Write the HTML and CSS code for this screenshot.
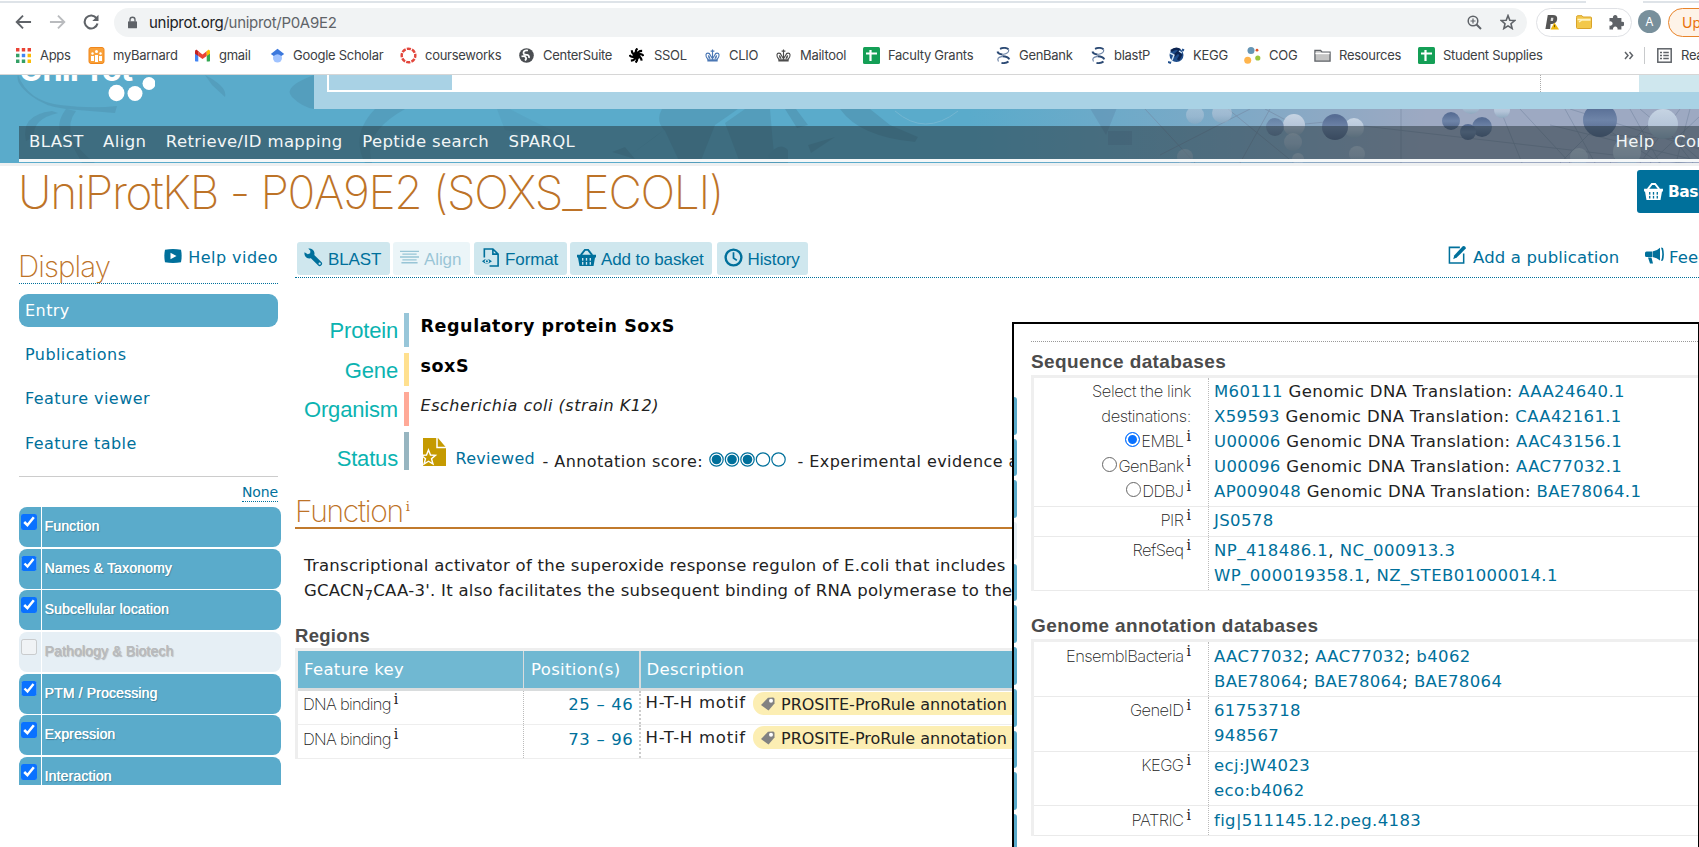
FILE: index.html
```
<!DOCTYPE html>
<html lang="en">
<head>
<meta charset="utf-8">
<title>UniProtKB - P0A9E2 (SOXS_ECOLI)</title>
<link rel="stylesheet" href="styles.css">
</head>
<body>
<svg width="0" height="0" class="defs">
  <symbol id="basket" viewBox="0 0 20 18"><path d="M0 6h20v3h-1l-1.600 9H2.600L1 9H0z" fill="currentColor"/><path d="M4 6.500 8.300 1h3.400L16 6.500" fill="none" stroke="currentColor" stroke-width="2"/><path d="M6 9.500v7M10 9.500v7M14 9.500v7" stroke="var(--gap)" stroke-width="1.400"/><path d="M3 13h14" stroke="currentColor" stroke-width="1.300"/></symbol>
  <symbol id="tag" viewBox="0 0 14 14"><path d="M0 8 7 0.800 12 0.500Q13.500 0.500 13.500 2V6.500L7.500 13.500Z" fill="#828282"/><circle cx="10" cy="3.800" r="2" fill="#fff"/></symbol>
  <symbol id="crown" viewBox="0 0 16 15"><path d="M3.500 12C2 10 .8 9 1 6.800 1.300 4.300 5 4.300 5.500 7L8 11M12.500 12C14 10 15.200 9 15 6.800 14.700 4.300 11 4.300 10.500 7L8 11M8 1V12M6 2.800h4" fill="none" stroke="currentColor" stroke-width="1.200"/><path d="M3 7.500Q4 6.500 5 8.500L6 11H4zM13 7.500Q12 6.500 11 8.500L10 11h2zM2.500 11.500h11V14h-11z" fill="currentColor"/></symbol>
  <symbol id="sheet" viewBox="0 0 17 17"><rect width="17" height="17" rx="1.500" fill="#149f56"/><path d="M3 6.500h11M7.500 3v11" stroke="#fff" stroke-width="2.200"/></symbol>
  <symbol id="ncbi" viewBox="0 0 15 17"><path d="M4 1.800Q9-.2 12.500 2.200M1.500 4.500Q2 7 6.500 7.500M6.500 9.300Q12 9.500 13.300 12.300M5.500 16Q10 16.500 12.500 14.500" fill="none" stroke="#2c4a74" stroke-width="1.900"/><path d="M12.500 2.200Q14 6.500 6.500 7.500M6.500 9.300Q0 10.500 2.500 14.500" fill="none" stroke="#6f86a8" stroke-width="1.200"/></symbol>
</svg>

<div class="chrome">
  <div class="tabs"><span></span><span></span></div>
  <div class="toolbar">
    <svg class="nav-arrow" viewBox="0 0 18 16"><path d="M17 8H2M8.500 1.300 1.800 8l6.700 6.700" fill="none" stroke="#5f6368" stroke-width="2"/></svg>
    <svg class="nav-arrow" viewBox="0 0 18 16"><path d="M1 8h15M9.500 1.300 16.200 8l-6.700 6.700" fill="none" stroke="#b9bbbe" stroke-width="2"/></svg>
    <svg class="reload" viewBox="0 0 16 16"><path d="M13.500 4.200A6.500 6.500 0 1 0 14.500 9.500" fill="none" stroke="#5f6368" stroke-width="2.100"/><path d="M15.500.8V7H9.300z" fill="#5f6368"/></svg>
    <div class="omnibox">
      <svg class="lock" viewBox="0 0 10 13"><rect y="5" width="10" height="8" rx="1" fill="#5f6368"/><path d="M2.200 5.500V3.500a2.800 2.800 0 0 1 5.600 0v2" fill="none" stroke="#5f6368" stroke-width="1.500"/></svg>
      <span class="url">uniprot.org<i>/uniprot/P0A9E2</i></span>
      <svg class="zoom" viewBox="0 0 15 15"><circle cx="6" cy="6" r="4.800" fill="none" stroke="#5f6368" stroke-width="1.500"/><path d="m9.500 9.500 4.500 4.500" stroke="#5f6368" stroke-width="2"/><path d="M3.500 6h5M6 3.500v5" stroke="#5f6368" stroke-width="1.200"/></svg>
      <svg class="star" viewBox="0 0 15 15"><path d="m7.500 1.500 1.700 4.300 4.600.3-3.500 3 1.100 4.500-3.900-2.500-3.900 2.500 1.100-4.500-3.500-3 4.600-.3z" fill="none" stroke="#5f6368" stroke-width="1.500"/></svg>
    </div>
    <div class="extensions">
      <svg viewBox="0 0 16 17"><path d="M3.500 1H9q5 0 4.500 4.500T8 10.500H6.500L6 16H1z" fill="#555"/><path d="M7 4h2.500L9 7.500H6.500z" fill="#ddd"/><path d="m10.500 9 5 7.500h-9z" fill="#efb90f"/><path d="M10.700 11.500v2.500" stroke="#704e00"/></svg>
      <svg viewBox="0 0 16 14"><path d="M.5 2.500V12.500q0 1 1 1h13q1 0 1-1V3q0-1-1-1H7L6 .7H1.500q-1 0-1 1.800z" fill="#f3c84a" stroke="#d9a32a"/><path d="M1.500 4.500h13M3 7l3-2h8.500" fill="none" stroke="#fff3c4" stroke-width="1.500"/></svg>
      <svg viewBox="0 0 16 16"><path d="M1.500 4H5a2.300 2.300 0 1 1 4.400 0h4v3.800a2.300 2.300 0 1 1 0 4.300V15.500H9.500a2.300 2.300 0 1 0-4.400 0H1.500v-4a2.200 2.200 0 1 0 0-4z" fill="#5f6368"/></svg>
    </div>
    <div class="avatar">A</div>
    <div class="update">Update</div>
  </div>
  <div class="bookmarks">
    <svg viewBox="0 0 14 14"><g fill="#ea4335"><path d="M0 0h3.200v3.200H0zM5.400 0h3.200v3.200H5.400zM10.800 0H14v3.200h-3.200z"/></g><g fill="#34a066"><path d="M0 5.400h3.200v3.200H0zM0 10.800h3.200V14H0zM5.400 10.800h3.200V14H5.400z"/></g><path d="M5.400 5.400h3.200v3.200H5.400z" fill="#4285f4"/><path d="M10.800 5.400H14v3.200h-3.200zM10.800 10.800H14V14h-3.200z" fill="#fbbc05"/></svg><span>Apps</span>
    <svg viewBox="0 0 16 17"><rect x=".5" y=".5" width="15" height="16" rx="2" fill="#f9a13a" stroke="#f0861b"/><path d="M2.500 14V9h3v5M10.500 14V9h3v5M6.500 15V8h3v7" fill="#fff"/><circle cx="4" cy="6.500" r="1.200" fill="#fff"/><circle cx="12" cy="6.500" r="1.200" fill="#fff"/><circle cx="8" cy="4.500" r="1.500" fill="#fff"/></svg><span>myBarnard</span>
    <svg viewBox="0 0 16 13"><path d="M0 2v10q0 .8.8.8H3.500V5z" fill="#4285f4"/><path d="M16 2v10q0 .8-.8.800H12.500V5z" fill="#34a853"/><path d="M3.500 7V2L8 5.400 12.500 2v5L8 10.200z" fill="#ea4335"/><path d="M0 2.200Q0 0 2 .4L3.500 2v5L0 4.500z" fill="#c5221f"/><path d="M16 2.200Q16 0 14 .4L12.500 2v5L16 4.500z" fill="#fbbc04"/></svg><span>gmail</span>
    <svg viewBox="0 0 14 15"><circle cx="7" cy="10" r="4.500" fill="#a0c3ff"/><path d="M7 .8 13.700 6 10.800 8Q7 4.500 3.200 8L.3 6z" fill="#3c78dc"/></svg><span>Google Scholar</span>
    <svg viewBox="0 0 18 18"><circle cx="9" cy="9" r="7.200" fill="none" stroke="#e2463c" stroke-width="2.600" stroke-dasharray="4.400 1.250" stroke-dashoffset="2"/></svg><span>courseworks</span>
    <svg viewBox="0 0 15 15"><circle cx="7.500" cy="7.500" r="7.300" fill="#4b4e52"/><path d="M9 2.500Q5 2 4.500 4.500T8 6.800Q10.500 7.500 10 10M2.500 8.500Q5 7.500 6.500 9T6 12.500" fill="none" stroke="#fff" stroke-width="1.700"/></svg><span>CenterSuite</span>
    <svg viewBox="0 0 16 16"><circle cx="8" cy="8" r="4" fill="#000"/><path d="M8 8Q6 3 9 .5M8 8Q9 3 14 3M8 8Q13 5 15.500 8.500M8 8Q13 9 13.500 13.500M8 8Q10 13 7 15.500M8 8Q7 13 2 13.500M8 8Q3 11 .5 7.500M8 8Q3 7 3 2.500" stroke="#000" stroke-width="2.300" fill="none"/></svg><span>SSOL</span>
    <svg class="blue"><use href="#crown"/></svg><span>CLIO</span>
    <svg class="grey"><use href="#crown"/></svg><span>Mailtool</span>
    <svg><use href="#sheet"/></svg><span>Faculty Grants</span>
    <svg><use href="#ncbi"/></svg><span>GenBank</span>
    <svg><use href="#ncbi"/></svg><span>blastP</span>
    <svg viewBox="0 0 17 17"><circle cx="8.500" cy="8" r="7" fill="#1f4e8c"/><path d="M3 4Q8 0 12 3M6 9l4-4 3 3-3 5" fill="none" stroke="#0c2450" stroke-width="2.500"/><path d="M2 6l4 2-2 5M11 4l3 2M1 16l3-2" stroke="#cfe3f5" stroke-width="1.400" fill="none"/><path d="M14 2.500l2 1M0 15l3 1" stroke="#1f4e8c" stroke-width="2"/></svg><span>KEGG</span>
    <svg viewBox="0 0 17 17"><circle cx="7" cy="3.500" r="3.500" fill="#6595b5"/><circle cx="13" cy="3.200" r="1.400" fill="#e0572a"/><circle cx="3.700" cy="13.300" r="3.500" fill="#ffb54d"/><circle cx="13.800" cy="11" r="2.600" fill="#9bc53d"/></svg><span>COG</span>
    <svg viewBox="0 0 18 15"><path d="M1 13V2h6l1.500 2H17v9.500H1z" fill="#c4c4c4" stroke="#5f6368" stroke-width="1.400"/><path d="M1.500 5.300h15" stroke="#fff" stroke-width="1.600"/></svg><span>Resources</span>
    <svg><use href="#sheet"/></svg><span>Student Supplies</span>
    <svg viewBox="0 0 10 9"><path d="M1 1l3 3.500L1 8M5.500 1l3 3.500-3 3.500" fill="none" stroke="#5f6368" stroke-width="1.500"/></svg><b></b>
    <svg viewBox="0 0 15 15"><rect x=".8" y=".8" width="13.400" height="13.400" fill="none" stroke="#5f6368" stroke-width="1.500"/><path d="M3 4.500h2M3 7.500h2M3 10.500h2M6.300 4.500h5.500M6.300 7.500h5.500M6.300 10.500h5.500" stroke="#5f6368" stroke-width="1.500"/></svg><span>Reading List</span>
  </div>
</div>

<header class="banner">
  <svg class="art" viewBox="0 0 1699 88" preserveAspectRatio="none">
    <defs>
      <linearGradient id="bg"><stop offset=".57" stop-color="#5aabcb"/><stop offset=".73" stop-color="#7fa9c6"/><stop offset=".84" stop-color="#9da9c2"/><stop offset="1" stop-color="#9da9c2"/></linearGradient>
      <linearGradient id="ball" x2="0" y2="1"><stop offset="0" stop-color="#c6d4e3"/><stop offset=".6" stop-color="#b4c4d8"/><stop offset="1" stop-color="#8fa9bf"/></linearGradient>
      <linearGradient id="dark" x2="0" y2="1"><stop offset=".1" stop-color="#576d94"/><stop offset=".5" stop-color="#6e84a8"/><stop offset="1" stop-color="#506488"/></linearGradient>
    </defs>
    <rect width="1699" height="88" fill="url(#bg)"/>
    <g fill="#539bb9">
      <path d="M18 0Q28 26 60 30T117 31L115 38Q90 36 66 34 45 32 30 20T18 0zM66 34Q50 55 72 70L82 88H95Q58 60 76 36zM52 36Q20 40 26 66L34 62Q32 44 58 38z" opacity=".8"/>
      <path d="M205 0Q228 12 225 22L212 10zM314 0Q282 12 292 22T314 34zM375 34Q350 60 365 88H372Q362 58 405 34z" opacity=".8"/>
      <path d="M497 34 505 55 570 64Q520 40 510 34z" opacity=".4"/>
      <path d="M662 34Q655 46 665 56L680 88H700L715 50 738 34zM725 48 745 34H770Q772 60 775 88H740z" opacity=".9"/>
      <path d="M785 34h11l12 16-11 3zM768 80q12-14 20-5v13h-18zM840 34Q860 62 915 67L918 62 890 50 870 34zM808 70 835 62 811 78zM635 84l-23-7 13-5zM655 62l10-8-40 30z"/>
    </g>
    <path d="M895 36Q925 62 958 36" fill="none" stroke="#74b6d1"/>
    <g stroke="#74859f" stroke-width=".8" opacity=".65"><path d="M1145 34l50 54M1160 80l90-46M1228 34l66 54M1240 88l30-54M1265 34l30 16M1355 50l345 40M1401 34v54M1295 50l40-4M1500 34l22 54M1520 34l50 54M1550 50l149 36M1560 88l40-40M1565 34l30 54M1600 50l60 38M1610 88l50-50M1630 34l30 54M1640 34l59 50M1650 88l49-46M1663 50l30 38M1680 34l-40 54M1690 34l-14 54M1610 60l89 5M1570 34l129 40"/></g>
    <g fill="url(#ball)"><circle cx="1195" cy="40" r="9" opacity=".5"/><circle cx="1222" cy="38" r="10" opacity=".6"/><circle cx="1294" cy="50" r="11"/><circle cx="1354" cy="53" r="10"/><circle cx="1293" cy="67" r="9" opacity=".6"/><circle cx="1357" cy="79" r="8" opacity=".7"/><circle cx="1185" cy="82" r="8" opacity=".5"/><circle cx="1298" cy="84" r="6" opacity=".6"/><circle cx="1502" cy="35" r="8"/><circle cx="1471" cy="29" r="10"/><circle cx="1663" cy="49" r="15"/><circle cx="1627" cy="77" r="14"/><circle cx="1579" cy="82" r="9" opacity=".8"/></g>
    <g fill="url(#dark)"><circle cx="1275" cy="52" r="9" opacity=".6"/><circle cx="1335" cy="52" r="13"/><circle cx="1451" cy="46" r="9"/><circle cx="1482" cy="52" r="10"/><circle cx="1468" cy="57" r="8"/><circle cx="1600" cy="45" r="17"/></g>
    <path d="M1108 56h24v14h-24zM1088 30l18 30 12-30z" fill="#5d86ab" opacity=".4"/>
  </svg>
  <div class="banner-rows">
    <div class="banner-top">
      <div class="logo"><span>UniProt</span>
        <svg viewBox="0 0 50 27"><ellipse cx="11.500" cy="18" rx="8" ry="8.200" fill="#fff"/><ellipse cx="30" cy="18.500" rx="7.500" ry="7.500" fill="#fff"/><ellipse cx="44" cy="8.500" rx="6.500" ry="6.500" fill="#fff"/></svg>
      </div>
      <div class="searchbox"><div class="dropdown"></div><div class="query"></div><div class="adv"></div><div class="go"></div></div>
    </div>
    <nav><a>BLAST</a><a>Align</a><a>Retrieve/ID mapping</a><a>Peptide search</a><a>SPARQL</a><a class="help">Help</a><a>Contact</a></nav>
  </div>
</header>

<div class="title-row">
  <h1>UniProtKB - P0A9E2 (SOXS_ECOLI)</h1>
  <div class="basket-btn"><svg><use href="#basket"/></svg>Basket</div>
</div>

<div class="columns">
  <aside>
    <div class="display-row"><h2>Display</h2>
      <div class="help-video"><svg viewBox="0 0 18 14"><path d="M1 .8Q9-.6 17 .8 18.300 7 17 13.200 9 14.600 1 13.200-.3 7 1 .8z" fill="#00709b"/><path d="m6.500 3.800 6 3.200-6 3.200z" fill="#fff"/></svg>Help video</div></div>
    <div class="tab on">Entry</div>
    <div class="tabs-list"><div>Publications</div><div>Feature viewer</div><div>Feature table</div></div>
    <div class="none"><span>None</span></div>
    <div class="sections">
      <label><input type="checkbox" checked><span>Function</span></label>
      <label><input type="checkbox" checked><span>Names &amp; Taxonomy</span></label>
      <label><input type="checkbox" checked><span>Subcellular location</span></label>
      <label class="off"><input type="checkbox" disabled><span>Pathology &amp; Biotech</span></label>
      <label><input type="checkbox" checked><span>PTM / Processing</span></label>
      <label><input type="checkbox" checked><span>Expression</span></label>
      <label><input type="checkbox" checked><span>Interaction</span></label>
    </div>
  </aside>

  <main>
    <div class="actions">
      <div class="btn b1"><svg viewBox="0 0 20 20"><path d="M8.500 8.500 16.500 16.500" stroke="#00709b" stroke-width="5" stroke-linecap="round"/><path d="M4.500.6A5.300 5.300 0 1 1 .6 4.500L4 6.500 6.500 5.500 6.700 3z" fill="#00709b"/><circle cx="16.500" cy="16.500" r="1.200" fill="#cfe7ee"/></svg>BLAST</div>
      <div class="btn b2 dim"><svg viewBox="0 0 20 20"><path d="M0 3.500h20M2.500 6.500h15M0 9.500h20M2.500 12.500h15M1.500 15.500h17" stroke="#00709b" stroke-width="1.400"/></svg>Align</div>
      <div class="btn b3"><svg viewBox="0 0 18 20"><path d="M2.500 10V1h9l5.500 5.500V19H8M11.500 1v5.500H17" fill="none" stroke="#00709b" stroke-width="1.700"/><path d="M0 14q5-5 10.500 0-5.500 5-10.500 0z" fill="#00709b"/><circle cx="5.200" cy="14" r="2.300" fill="#cfe7ee"/><circle cx="5.200" cy="14" r="1.100" fill="#00709b"/></svg>Format</div>
      <div class="btn b4"><svg><use href="#basket"/></svg>Add to basket</div>
      <div class="btn b5"><svg viewBox="0 0 20 20"><circle cx="10" cy="10" r="8.300" fill="none" stroke="#00709b" stroke-width="2.500"/><path d="M10 4.500V10.500L13.500 13" fill="none" stroke="#00709b" stroke-width="1.800"/></svg>History</div>
      <div class="link pub"><svg viewBox="0 0 19 20"><path d="M12 2.500H1V19H16V9" fill="none" stroke="#00709b" stroke-width="1.600"/><path d="m5 15 1-4L15 1.300Q17.500.5 18.500 3.500L9 13z" fill="#00709b"/></svg>Add a publication</div>
      <div class="link feed"><svg viewBox="0 0 19 17"><path d="M0 6q0-1.500 1.500-1.500H7V10H1.500Q0 10 0 8.500zM7.500 4.500Q12 4 15 .8V13.500Q12 10.500 7.500 10zM3 10.500H6.500L8 16.500H5zM16 .5q2.500 6.500 0 13.500l2-.5q1.800-6 0-12.500z" fill="#00709b"/></svg>Feedback</div>
    </div>

    <dl class="facts">
      <div class="c1"><dt>Protein</dt><dd><b>Regulatory protein SoxS</b></dd></div>
      <div class="c2"><dt>Gene</dt><dd><b>soxS</b></dd></div>
      <div class="c3"><dt>Organism</dt><dd><i>Escherichia coli (strain K12)</i></dd></div>
      <div class="c4"><dt>Status</dt><dd class="status">
        <svg class="seal" viewBox="0 0 23 28"><path d="M0 0H15L23 9.500V28H0z" fill="#c59a00"/><path d="M14 0V9.500H23" fill="none" stroke="#fff" stroke-width="1.500"/><path d="m5.500 12 2 5 5 .3-4 3.400L10 26l-4.500-2.800L1 26l1.500-5.300L-1.500 17.300 3.500 17z" fill="#c59a00" stroke="#fff" stroke-width="1.400"/></svg>
        <span class="reviewed">Reviewed</span><span class="ann">- Annotation score:</span>
        <svg class="score" viewBox="0 0 78 15"><g fill="none" stroke="#00709b" stroke-width="1.200"><circle cx="7.500" cy="7.500" r="6.700"/><circle cx="23" cy="7.500" r="6.700"/><circle cx="38.500" cy="7.500" r="6.700"/><circle cx="54" cy="7.500" r="6.700"/><circle cx="69.500" cy="7.500" r="6.700"/></g><g fill="#00709b"><circle cx="7.500" cy="7.500" r="4.800"/><circle cx="23" cy="7.500" r="4.800"/><circle cx="38.500" cy="7.500" r="4.800"/></g></svg>
        <span class="exp">- Experimental evidence at protein level</span></dd></div>
    </dl>

    <h2 class="function">Function<sup>i</sup></h2>
    <p>Transcriptional activator of the superoxide response regulon of E.coli that includes<br><span class="line2">GCACN<sub>7</sub>CAA-3'. It also facilitates the subsequent binding of RNA polymerase to the</span></p>
    <h3>Regions</h3>
    <div class="features">
      <div class="fh"><span>Feature key</span><span>Position(s)</span><span>Description</span></div>
      <div class="fr"><span class="thin">DNA binding<sup>i</sup></span><span class="pos">25 – 46</span><span class="desc"><em>H-T-H motif</em><u><svg><use href="#tag"/></svg>PROSITE-ProRule annotation</u></span></div>
      <div class="fr r2"><span class="thin">DNA binding<sup>i</sup></span><span class="pos">73 – 96</span><span class="desc"><em>H-T-H motif</em><u><svg><use href="#tag"/></svg>PROSITE-ProRule annotation</u></span></div>
    </div>
  </main>
</div>

<section class="inset">
  <div class="edge"><i></i><i></i><i></i><i class="pale"></i><i></i><i></i><i></i><i></i><i></i><i></i><i></i></div>
  <div class="xrefs">
    <h3>Sequence databases</h3>
    <div class="xt">
      <div class="xr"><div class="xl"><span class="plain">Select the link</span><span class="plain">destinations:</span><span><s class="sel"></s>EMBL<sup>i</sup></span><span><s></s>GenBank<sup>i</sup></span><span><s></s>DDBJ<sup>i</sup></span></div>
        <div class="xv"><span><a>M60111</a> Genomic DNA Translation: <a>AAA24640.1</a></span><span><a>X59593</a> Genomic DNA Translation: <a>CAA42161.1</a></span><span><a>U00006</a> Genomic DNA Translation: <a>AAC43156.1</a></span><span><a>U00096</a> Genomic DNA Translation: <a>AAC77032.1</a></span><span><a>AP009048</a> Genomic DNA Translation: <a>BAE78064.1</a></span></div></div>
      <div class="xr"><div class="xl"><span>PIR<sup>i</sup></span></div><div class="xv"><span><a>JS0578</a></span></div></div>
      <div class="xr"><div class="xl"><span>RefSeq<sup>i</sup></span></div><div class="xv wide"><span><a>NP_418486.1</a>, <a>NC_000913.3</a></span><span><a>WP_000019358.1</a>, <a>NZ_STEB01000014.1</a></span></div></div>
    </div>
    <h3 class="second">Genome annotation databases</h3>
    <div class="xt genome">
      <div class="xr"><div class="xl"><span>EnsemblBacteria<sup>i</sup></span></div><div class="xv"><span><a>AAC77032</a>; <a>AAC77032</a>; <a>b4062</a></span><span><a>BAE78064</a>; <a>BAE78064</a>; <a>BAE78064</a></span></div></div>
      <div class="xr"><div class="xl"><span>GeneID<sup>i</sup></span></div><div class="xv"><span><a>61753718</a></span><span><a>948567</a></span></div></div>
      <div class="xr"><div class="xl"><span>KEGG<sup>i</sup></span></div><div class="xv"><span><a>ecj:JW4023</a></span><span><a>eco:b4062</a></span></div></div>
      <div class="xr"><div class="xl"><span>PATRIC<sup>i</sup></span></div><div class="xv"><span><a>fig|511145.12.peg.4183</a></span></div></div>
    </div>
  </div>
</section>
</body>
</html>
```
FILE: styles.css
```
* { box-sizing: border-box; }
body { margin: 0; width: 1699px; height: 847px; overflow: hidden; position: relative; background: #fff; color: #222; font: 16.5px "DejaVu Sans", sans-serif; white-space: nowrap; }
h1, h2, h3, p, dl, dd { margin: 0; }
svg { display: block; flex: none; }
.defs { position: absolute; }
i { font-style: normal; }

/* browser chrome */
.chrome { height: 75px; border-bottom: 1px solid #d6d6d6; font-family: Inter, sans-serif; }
.tabs { display: flex; justify-content: space-between; height: 3px; padding-top: 1px; }
.tabs span { width: 1586px; background: #dee3e8; }
.tabs span + span { width: 56px; }
.toolbar { display: flex; align-items: center; height: 37px; overflow: hidden; }
.toolbar > * { flex: none; }
.nav-arrow { width: 17px; height: 16px; margin-left: 15px; }
.nav-arrow + .nav-arrow { margin-left: 17px; }
.reload { width: 16px; height: 16px; margin-left: 17px; }
.omnibox { display: flex; align-items: center; width: 1413px; height: 29px; margin: 1px 0 0 15px; padding-left: 14px; border-radius: 15px; background: #f1f3f4; }
.lock { width: 9px; height: 13px; }
.url { width: 1308px; margin-left: 12px; font-size: 15px; letter-spacing: -.3px; color: #202124; }
.url i { color: #5f6368; }
.zoom { width: 15px; height: 15px; margin-left: 10px; }
.star { width: 16px; height: 16px; margin-left: 18px; }
.extensions { display: flex; align-items: center; justify-content: space-between; width: 96px; height: 29px; margin: 1px 0 0 9px; padding: 0 7px; border: 1px solid #dfe1e5; border-radius: 15px; }
.extensions svg { width: 16px; height: 16px; }
.avatar { width: 23px; height: 23px; margin-left: 6px; border-radius: 50%; background: #78909c; color: #fff; font-size: 12px; line-height: 23px; text-align: center; }
.update { width: 100px; height: 29px; margin: 1px 0 0 7px; padding-left: 13px; border: 1.5px solid #e8842b; border-radius: 15px; background: #fef3e8; color: #e8710a; font-size: 14px; line-height: 27px; }
.bookmarks { display: grid; align-items: center; height: 30px; padding-left: 16px; font-size: 13px; line-height: 16px; letter-spacing: -.28px; color: #3c4043;
  grid-template-columns: 24px 48px 25px 82px 24px 51px 23px 107px 25px 94px 24px 86px 25px 51px 24px 47px 24px 63px 25px 108px 23px 72px 23px 54px 25px 51px 25px 45px 25px 79px 25px 181px 20px 13px 24px 60px; }
.bookmarks svg { width: 15px; height: 15px; }
.bookmarks svg:nth-of-type(2), .bookmarks svg:nth-of-type(5), .bookmarks svg:nth-of-type(10), .bookmarks svg:nth-of-type(13), .bookmarks svg:nth-of-type(14), .bookmarks svg:nth-of-type(15), .bookmarks svg:nth-of-type(16) { width: 17px; height: 17px; }
.bookmarks svg:nth-of-type(11), .bookmarks svg:nth-of-type(12) { height: 17px; }
.bookmarks svg:nth-of-type(17) { width: 10px; height: 9px; }
.bookmarks b { width: 1px; height: 17px; background: #c8cacc; }
.blue { color: #4a77b4; }
.grey { color: #4c4c4c; }

/* site banner */
.banner { position: relative; height: 91px; border-bottom: 3px solid #eef0f1; }
.art { position: absolute; left: 0; top: 0; width: 1699px; height: 88px; }
.banner-rows { position: relative; }
.banner-top { display: flex; height: 51px; }
.logo { display: flex; width: 314px; height: 30px; overflow: hidden; padding-left: 19px; }
.logo span { height: 9px; width: 86px; margin-top: -24px; font: 700 33px/36px Inter, sans-serif; letter-spacing: -1px; color: #fff; }
.logo svg { width: 50px; height: 27px; }
.searchbox { display: flex; width: 1385px; height: 34px; padding-left: 13px; border-bottom: 17px solid #a9d2e5; background: #a9d2e5; }
.dropdown { width: 125px; height: 17px; border: 2px solid #fff; border-top: 0; border-right: 0; background: #a9d2e5; }
.query { width: 1088px; background: #fff; }
.adv { width: 99px; border-left: 1px dotted #aaa; background: #fff; }
.go { width: 60px; background: #cfe7ee; }
nav { display: flex; height: 36px; margin-left: 19px; padding-left: 10px; border-bottom: 3px solid #f4f7f8; background: rgba(34, 47, 53, .5); background-clip: padding-box; color: #f2f6f7; font-size: 16.5px; line-height: 32px; letter-spacing: .37px; }
nav a { margin-right: 19.500px; }
nav .help { margin-left: auto; }
nav .help + a { width: 5px; margin-right: 20px; }

.title-row { display: flex; justify-content: space-between; height: 63px; padding-left: 18px; }
h1 { font: 200 46px/52px Inter, sans-serif; letter-spacing: -1.3px; color: #bd7328; }
.basket-btn { display: flex; align-items: center; flex: none; width: 62px; height: 43px; margin-top: 4px; padding-left: 7px; gap: 5px; border-radius: 3px 0 0 3px; background: #00709b; color: #fff; font-weight: 700; font-size: 15.5px; letter-spacing: -.5px; --gap: #00709b; }
.basket-btn svg { width: 19px; height: 17px; }

.columns { display: flex; height: 618px; }

/* sidebar */
aside { width: 295px; padding-left: 19px; color: #00709b; font-size: 16px; letter-spacing: .44px; flex: none; }
.display-row { display: flex; justify-content: space-between; width: 259px; height: 55px; border-bottom: 1.500px dotted #00709b; }
.display-row h2 { margin: 22px 0 0 -1px; font: 200 29.500px/30px Inter, sans-serif; letter-spacing: -.9px; color: #bd7328; }
.help-video { display: flex; align-items: flex-start; margin-top: 17px; gap: 6px; line-height: 24px; }
.help-video svg { width: 18px; height: 14px; margin-top: 3px; }
.tab { width: 259px; height: 33px; margin-top: 10px; padding-left: 6px; border-radius: 9px; background: #5aabcb; color: #fff; line-height: 34px; }
.tabs-list { width: 259px; height: 150px; padding: 5.500px 0 0 6px; border-bottom: 1px solid #ccc; line-height: 44.500px; }
.none { display: flex; justify-content: flex-end; width: 259px; height: 30px; padding-top: 4px; font-size: 14px; line-height: 22px; letter-spacing: -.1px; }
.none span { height: 21px; border-bottom: 1px dotted #00709b; }
.sections { display: flex; flex-direction: column; gap: 1.700px; width: 262px; height: 278px; overflow: hidden; font: 14px "Liberation Sans", sans-serif; letter-spacing: .15px; color: #fff; }
.sections label { display: flex; flex: none; height: 40px; border-radius: 8px; background: #5aabcb; text-shadow: .3px 0 0 currentColor, 1px 1px 1px rgba(0, 0, 0, .25); }
.sections input { width: 15.500px; height: 15.500px; margin: 7px 4.500px 0 2px; accent-color: #0a72ff; }
.sections span { padding: 7px 0 0 2.500px; line-height: 24px; border-left: 1.300px solid #fff; }
.sections .off { background: #e6eff5; color: #b9babb; }

/* main column */
main { width: 1404px; flex: none; }
.actions { display: flex; height: 48.500px; padding-left: 2px; border-bottom: 1.500px dotted #00709b; color: #00709b; }
.btn { display: flex; height: 33px; margin: 13px 3px 0 0; padding: 5px 0 0 7px; gap: 5px; border-radius: 3px; background: #cfe7ee; font: 17px/26px "Liberation Sans", sans-serif; letter-spacing: -.1px; --gap: #cfe7ee; }
.btn svg { width: 19px; height: 19px; margin-top: 1px; }
.b1 { width: 93px; }
.b2 { width: 77px; margin-right: 4px; }
.b3 { width: 93px; }
.b4 { width: 142px; margin-right: 4.500px; }
.b5 { width: 91.500px; }
.dim { opacity: .4; }
.link { display: flex; padding-top: 16px; gap: 6px; line-height: 25px; letter-spacing: .15px; }
.pub { margin-left: auto; width: 197px; }
.feed { width: 54px; gap: 5px; }
.link svg { width: 19px; height: 19px; }
.feed svg { height: 17px; margin-top: 2px; }

.facts { display: flex; flex-direction: column; gap: 6px; margin-top: 35.500px; }
.facts div { display: flex; height: 34px; }
.facts dt { width: 114px; padding-right: 6px; border-right: 5px solid #98c6d9; text-align: right; font: 22px/35px "Liberation Sans", sans-serif; letter-spacing: -.17px; color: #0bb3b1; }
.facts dd { padding-left: 11.500px; line-height: 27px; color: #000; }
.facts b { font-size: 17.500px; letter-spacing: .58px; }
.facts .c2 dd { line-height: 26px; }
.facts dd i { font-style: italic; font-size: 16px; letter-spacing: .53px; line-height: 27px; color: #222; }
.facts .c2 { height: 33px; }
.facts .c2 dt { border-color: #ffe08f; }
.facts .c3 dt { border-color: #ffa997; line-height: 36px; }
.facts .c4 { height: 38px; }
.facts .c4 dt { border-color: #97b5c0; padding-top: 16px; line-height: 22px; }
.facts .status { display: flex; line-height: 22px; font-size: 16px; letter-spacing: .45px; color: #222; }
.seal { width: 23px; height: 28px; margin: 6px 0 0 2px; }
.reviewed { width: 79px; margin: 15.500px 8px 0 10px; color: #00709b; letter-spacing: .3px; }
.ann { width: 161px; margin: 18.500px 5px 0 0; }
.score { width: 78px; height: 15px; margin-top: 19.500px; }
.exp { margin: 18.500px 0 0 11px; }

.function { height: 35px; margin-top: 24px; border-bottom: 2px solid #c17a2c; font: 200 30px/34px Inter, sans-serif; letter-spacing: -1.300px; color: #bd7328; }
.function sup { margin-left: 3px; font: 13px/0 "DejaVu Serif", serif; vertical-align: 11px; }
main p { margin-top: 24px; padding-left: 9px; font-size: 16.500px; line-height: 25px; letter-spacing: .26px; }
main p sub { font-size: 13.500px; line-height: 0; vertical-align: -4px; }
h3 { font: 700 18.500px/27px "Liberation Sans", sans-serif; letter-spacing: .3px; color: #4b4b4b; }
main h3 { height: 26px; margin-top: 19px; }
.features { border: 3px solid #eee; border-right: 0; border-bottom: 0; }
.fh, .fr { display: grid; grid-template-columns: 225px 115.500px 1fr; }
.fh { height: 40px; border-bottom: 3px solid #d9dcdd; background: #70b8d2; color: #fff; line-height: 37px; letter-spacing: .34px; }
.fh span { padding-left: 6px; }
.fh span + span { padding-left: 7px; border-left: 1px solid #d9dcdd; }
.fh span + span + span { border-left-width: 2px; padding-left: 6px; }
.fr { height: 34px; border-bottom: 1px solid #eee; }
.fr > span { padding: 1px 0 0 5px; line-height: 25px; }
.r2 > span { padding-top: 2px; }
.thin, .xl { font-family: Inter, sans-serif; font-weight: 200; font-size: 16.500px; letter-spacing: -.750px; color: #222; }
.xl { letter-spacing: -.55px; }
.plain { letter-spacing: -.38px; }
.thin sup, .xl sup { font: 400 14px/0 "DejaVu Serif", serif; letter-spacing: 0; vertical-align: 6px; }
.thin sup { margin-left: 3px; }
.pos { border-left: 1px dotted #bbb; text-align: right; color: #00709b; padding-right: 5px !important; letter-spacing: .65px; }
.fr .desc { display: flex; border-left: 2px dotted #ccc; padding-top: 0; line-height: 23px; }
.desc em { width: 107.500px; font-style: normal; letter-spacing: .75px; }
.r2 .desc em { padding-top: 1px; }
.desc u { display: flex; align-items: center; width: 300px; height: 23px; margin-top: 1px; padding: 2px 0 0 8px; gap: 6px; border-radius: 11px; background: #fceeb3; font-size: 16px; letter-spacing: 0; text-decoration: none; }
.desc svg { width: 14px; height: 14px; margin-top: -2px; }

/* inset panel laid over the entry page */
.inset { position: absolute; left: 1012px; top: 322px; width: 687px; height: 525px; display: flex; border: 2px solid #000; border-right-width: 1px; border-bottom: 0; background: #fff; overflow: hidden; }
.edge { display: flex; flex-direction: column; gap: 4px; width: 3px; padding-top: 73px; }
.edge i { flex: none; height: 37.700px; border-radius: 0 5px 5px 0; background: #5aabcb; }
.edge .pale { background: #e6eff5; }
.xrefs { width: 668px; margin: 17px 0 0 14px; padding-top: 14px; border-top: 1px dotted #999; }
.xrefs h3 { height: 26px; margin-top: -7px; font-size: 19px; line-height: 26px; letter-spacing: .4px; }
.xrefs .second { margin-top: 22px; }
.xt { border: 3px solid #efefef; border-right: 0; border-bottom: 0; margin-top: 0; }
.xr { display: grid; grid-template-columns: 174px 1fr; border-bottom: 1px solid #eaeaea; }
.xl, .xv { display: flex; flex-direction: column; padding: 1px 0 2.400px; line-height: 25px; }
.genome .xl, .genome .xv { padding: 1.500px 0 2.200px; }
.xr .xl { align-items: flex-end; padding-right: 17px; }
.xl span { height: 25px; }
.xl sup { margin-left: 3px; }
.xl s { display: inline-block; width: 15px; height: 15px; margin-right: 1px; border: 1px solid #666; border-radius: 50%; vertical-align: 0; }
.xl .sel { border: 1.500px solid #0a72ff; background: #0a72ff; box-shadow: inset 0 0 0 2px #fff; }
.xr .xv { padding-left: 5px; border-left: 1px dotted #bbb; letter-spacing: .36px; }
.xr .wide { letter-spacing: .45px; }
.xv a { color: #00709b; }
```
